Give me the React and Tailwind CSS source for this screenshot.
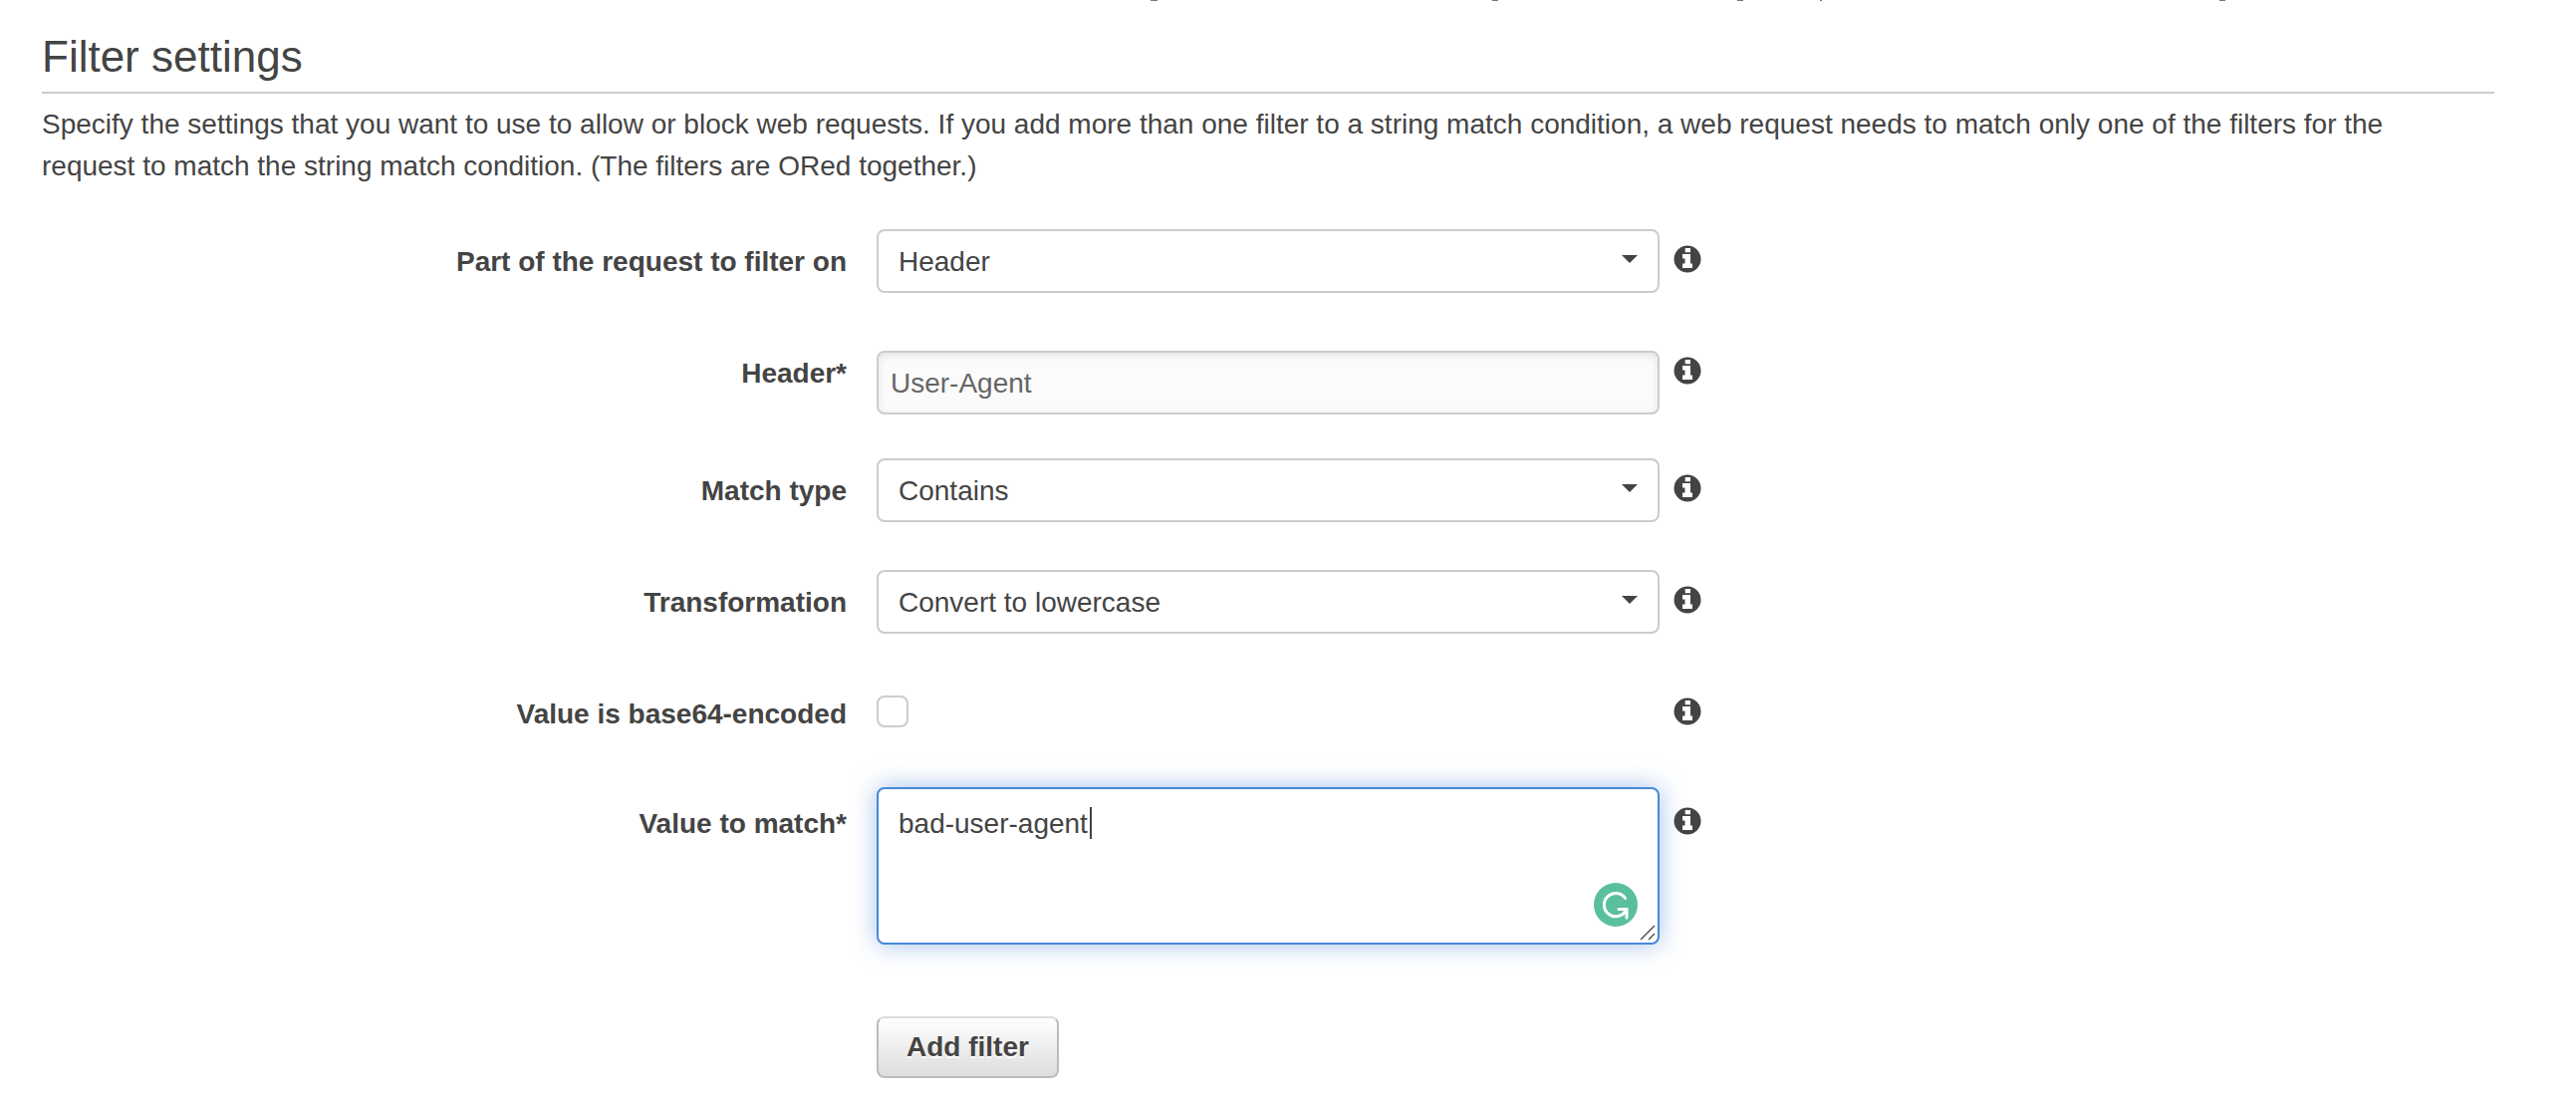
import { useEffect, useRef } from "react";

const control = "block w-full rounded-lg border-2 text-[28px] leading-8 text-[#444] outline-none";

function InfoIcon() {
  return (
    <svg className="size-7" viewBox="0 0 28 28" aria-hidden="true">
      <circle cx="14" cy="14" r="13.5" fill="#444" />
      <path fill="#fff" d="M11.700 3h5.300v4.300h-5.300zM9 9h8v9.500h2V23H9v-4.500h2.500V13.500H9z" />
    </svg>
  );
}

function Row({ id, label, info = true, className, children }) {
  return (
    <div className={`grid grid-cols-[838fr_786fr_838fr] ${className}`}>
      <label htmlFor={id} className="pr-[30px] pt-[17px] text-right text-[28px] leading-8 font-bold">
        {label}
      </label>
      <div>{children}</div>
      {info && (
        <button type="button" aria-label={`About ${label}`} className="mt-4 ml-3.5 size-7">
          <InfoIcon />
        </button>
      )}
    </div>
  );
}

function Select({ id, value }) {
  return (
    <div className="relative">
      <select
        id={id}
        defaultValue={value}
        className={`${control} h-16 appearance-none border-[#ccc] bg-white px-5 pt-0.5`}
      >
        <option>{value}</option>
      </select>
      <svg
        className="pointer-events-none absolute top-[26px] right-[22px] h-2 w-4"
        viewBox="0 0 16 8"
        aria-hidden="true"
      >
        <path d="M0 0h16L8 8z" fill="#444" />
      </svg>
    </div>
  );
}

export default function App() {
  const valueRef = useRef(null);
  useEffect(() => {
    const el = valueRef.current;
    el.focus();
    el.setSelectionRange(el.value.length, el.value.length);
  }, []);

  return (
    <main className="relative bg-white pr-[82px] pb-7 pl-[42px] font-['Liberation_Sans',Arial,sans-serif] text-[#444]">
      {/* Lower edge of the content scrolled out above */}
      <svg
        className="absolute top-0 left-0 h-px w-full"
        viewBox="0 0 2586 1"
        preserveAspectRatio="none"
        aria-hidden="true"
      >
        <path fill="#777" d="M1155 0h7v1h-7zM1498 0h6v1h-6zM1744 0h6v1h-6zM1827 0h2v1h-2zM2228 0h6v1h-6z" />
      </svg>
      <h1 className="border-b-2 border-[#ccc] pt-[33px] pb-[11px] text-[44px] leading-12">Filter settings</h1>
      <p className="pt-[10px] pr-10 text-[28px] leading-[42px]">
        Specify the settings that you want to use to allow or block web requests. If you add more than one filter to a
        string match condition, a web request needs to match only one of the filters for the request to match the string
        match condition. (The filters are ORed together.)
      </p>
      <form className="pt-[42px]" onSubmit={(e) => e.preventDefault()}>
        <Row id="part" label="Part of the request to filter on" className="h-28">
          <Select id="part" value="Header" />
        </Row>
        <Row id="header" label="Header*" className="h-[118px]">
          <input
            id="header"
            defaultValue="User-Agent"
            className={`${control} mt-[10px] h-16 border-[#ccc] bg-[#fbfbfb] px-3 pt-0.5 text-[#666] shadow-[inset_0_2px_8px_rgba(0,0,0,0.1)]`}
          />
        </Row>
        <Row id="match" label="Match type" className="h-28">
          <Select id="match" value="Contains" />
        </Row>
        <Row id="transformation" label="Transformation" className="h-28">
          <Select id="transformation" value="Convert to lowercase" />
        </Row>
        <Row id="base64" label="Value is base64-encoded" className="h-[110px]">
          <input
            id="base64"
            type="checkbox"
            className="mt-3.5 block size-8 appearance-none rounded-lg border-2 border-[#ccc] bg-white"
          />
        </Row>
        <Row id="value" label="Value to match*" className="h-[226px]">
          <div className="relative -mt-1">
            <textarea
              id="value"
              ref={valueRef}
              spellCheck={false}
              defaultValue="bad-user-agent"
              className={`${control} h-[158px] resize-none border-[#4788d9] bg-white px-5 py-[19px] caret-transparent shadow-[0_0_24px_rgba(71,136,217,0.5)]`}
            />
            <span className="pointer-events-none absolute top-5 left-[214px] h-8 w-0.5 bg-[#444]" />
            <svg className="absolute right-[22px] bottom-[18px] size-11" viewBox="0 0 44 44" aria-hidden="true">
              <circle cx="22" cy="22" r="22" fill="#5abf9d" />
              <path
                d="M31.500 15.500A11.600 11.600 0 1 0 32 28M25 26.500H33V35"
                fill="none"
                stroke="#fff"
                strokeWidth="3"
                strokeLinecap="round"
              />
            </svg>
            <svg className="absolute right-1 bottom-1 size-4" viewBox="0 0 16 16" aria-hidden="true">
              <path d="M1 15L15 1M9 15l6-6" stroke="#555" strokeWidth="1.500" />
            </svg>
          </div>
        </Row>
        <Row id="add" info={false}>
          <button
            id="add"
            type="submit"
            className="block h-[62px] rounded-lg border-2 border-[#bbb] border-t-[#ddd] bg-linear-to-b from-white to-[#ddd] px-7 text-[28px] leading-8 font-bold text-shadow-[0_2px_0_#fff]"
          >
            Add filter
          </button>
        </Row>
      </form>
    </main>
  );
}
